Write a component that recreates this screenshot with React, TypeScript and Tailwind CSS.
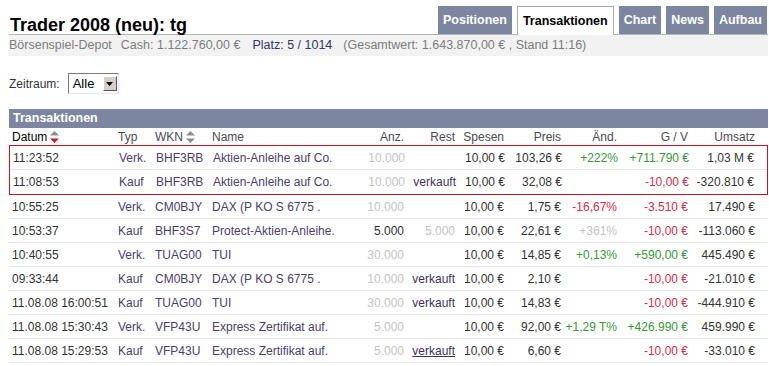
import React from 'react';

/* ════════════════════════════════════════════
   Depot header — title, tabs, summary line
   ════════════════════════════════════════════ */

const tabs = [
    { label: 'Positionen', active: false },
    { label: 'Transaktionen', active: true },
    { label: 'Chart', active: false },
    { label: 'News', active: false },
    { label: 'Aufbau', active: false },
];

function Header() {
    return (
        <div>
            <div className="flex items-end justify-between h-[35px] border-b border-[#b4b4b4] pl-[1px]">
                <h1 className="text-[18px] leading-[18px] font-bold text-black">Trader 2008 (neu): tg</h1>
                <div className="flex items-end gap-[5px] pr-[1px]">
                    {tabs.map((t) =>
                        t.active ? (
                            <div
                                key={t.label}
                                className="h-[29px] -mb-[1px] px-[5px] flex items-center bg-white border border-b-0 border-[#a8a8a8] text-[12.5px] font-bold text-black"
                            >
                                {t.label}
                            </div>
                        ) : (
                            <div
                                key={t.label}
                                className="h-[28px] px-[5px] flex items-center bg-[#7d86a1] text-[12.5px] font-bold text-white"
                            >
                                {t.label}
                            </div>
                        )
                    )}
                </div>
            </div>
            <div className="h-[21px] flex items-center bg-[#f2f2f2] text-[12.5px] text-[#7d7d7d] whitespace-nowrap">
                <span>Börsenspiel-Depot</span>
                <span className="ml-[9px]">Cash: 1.122.760,00 €</span>
                <span className="ml-[12px] text-[#34346e]">Platz: 5 / 1014</span>
                <span className="ml-[11px]">(Gesamtwert: 1.643.870,00 € , Stand 11:16)</span>
            </div>
        </div>
    );
}

/* ════════════════════════════════════════════
   Zeitraum filter — classic select box
   ════════════════════════════════════════════ */

function Zeitraum() {
    return (
        <div className="flex items-center mt-[17px] h-[21px]">
            <span className="text-[12px] text-[#333]">Zeitraum:</span>
            <div className="ml-[8px] w-[51px] h-[21px] flex items-center border border-t-[#7a7a7a] border-l-[#7a7a7a] border-b-[#e8e8e8] border-r-[#e8e8e8] bg-white">
                <span className="flex-1 pl-[4px] text-[13px] text-black leading-none">Alle</span>
                <div className="w-[14px] h-[15px] mr-[1px] flex items-center justify-center bg-[#d4d0c8] border border-t-white border-l-white border-b-[#555] border-r-[#555]">
                    <svg width="7" height="4" viewBox="0 0 7 4">
                        <polygon points="0,0 7,0 3.5,4" fill="#000" />
                    </svg>
                </div>
            </div>
        </div>
    );
}

/* ════════════════════════════════════════════
   Transactions table
   ════════════════════════════════════════════ */

const grid =
    'grid grid-cols-[106px_37px_57px_146px_52px_51px_49px_57px_56px_71px_1fr]';

type Tone = 'plain' | 'light' | 'green' | 'red';

interface Tx {
    datum: string;
    typ: string;
    wkn: string;
    name: string;
    anz: string;
    anzTone: Tone;
    rest?: string;
    restTone?: Tone;
    restLink?: boolean;
    spesen: string;
    preis: string;
    aend?: string;
    aendTone?: Tone;
    gv: string;
    gvTone: Tone;
    umsatz: string;
}

const rows: Tx[] = [
    { datum: '11:23:52', typ: 'Verk.', wkn: 'BHF3RB', name: 'Aktien-Anleihe auf Co.', anz: '10.000', anzTone: 'light', spesen: '10,00 €', preis: '103,26 €', aend: '+222%', aendTone: 'green', gv: '+711.790 €', gvTone: 'green', umsatz: '1,03 M €' },
    { datum: '11:08:53', typ: 'Kauf', wkn: 'BHF3RB', name: 'Aktien-Anleihe auf Co.', anz: '10.000', anzTone: 'light', rest: 'verkauft', spesen: '10,00 €', preis: '32,08 €', gv: '-10,00 €', gvTone: 'red', umsatz: '-320.810 €' },
    { datum: '10:55:25', typ: 'Verk.', wkn: 'CM0BJY', name: 'DAX (P KO S 6775 .', anz: '10.000', anzTone: 'light', spesen: '10,00 €', preis: '1,75 €', aend: '-16,67%', aendTone: 'red', gv: '-3.510 €', gvTone: 'red', umsatz: '17.490 €' },
    { datum: '10:53:37', typ: 'Kauf', wkn: 'BHF3S7', name: 'Protect-Aktien-Anleihe.', anz: '5.000', anzTone: 'plain', rest: '5.000', restTone: 'light', spesen: '10,00 €', preis: '22,61 €', aend: '+361%', aendTone: 'light', gv: '-10,00 €', gvTone: 'red', umsatz: '-113.060 €' },
    { datum: '10:40:55', typ: 'Verk.', wkn: 'TUAG00', name: 'TUI', anz: '30.000', anzTone: 'light', spesen: '10,00 €', preis: '14,85 €', aend: '+0,13%', aendTone: 'green', gv: '+590,00 €', gvTone: 'green', umsatz: '445.490 €' },
    { datum: '09:33:44', typ: 'Kauf', wkn: 'CM0BJY', name: 'DAX (P KO S 6775 .', anz: '10.000', anzTone: 'light', rest: 'verkauft', spesen: '10,00 €', preis: '2,10 €', gv: '-10,00 €', gvTone: 'red', umsatz: '-21.010 €' },
    { datum: '11.08.08 16:00:51', typ: 'Kauf', wkn: 'TUAG00', name: 'TUI', anz: '30.000', anzTone: 'light', rest: 'verkauft', spesen: '10,00 €', preis: '14,83 €', gv: '-10,00 €', gvTone: 'red', umsatz: '-444.910 €' },
    { datum: '11.08.08 15:30:43', typ: 'Verk.', wkn: 'VFP43U', name: 'Express Zertifikat auf.', anz: '5.000', anzTone: 'light', spesen: '10,00 €', preis: '92,00 €', aend: '+1,29 T%', aendTone: 'green', gv: '+426.990 €', gvTone: 'green', umsatz: '459.990 €' },
    { datum: '11.08.08 15:29:53', typ: 'Kauf', wkn: 'VFP43U', name: 'Express Zertifikat auf.', anz: '5.000', anzTone: 'light', rest: 'verkauft', restLink: true, spesen: '10,00 €', preis: '6,60 €', gv: '-10,00 €', gvTone: 'red', umsatz: '-33.010 €' },
];

const toneClass: Record<Tone, string> = {
    plain: 'text-[#333]',
    light: 'text-[#c4c4c4]',
    green: 'text-[#3a963a]',
    red: 'text-[#d42d45]',
};

function SortArrows({ active = false }: { active?: boolean }) {
    return (
        <svg width="9" height="12" viewBox="0 0 9 12" className="ml-[3px]">
            <polygon points="4.5,0 9,4.5 0,4.5" fill="#8c8c8c" />
            <polygon points="0,7.5 9,7.5 4.5,12" fill={active ? '#c8202e' : '#8c8c8c'} />
        </svg>
    );
}

function HeaderRow() {
    const r = 'text-right pr-[3px]';
    return (
        <div className={`${grid} h-[17px] items-center text-[12px] text-[#4a4a55] bg-white`}>
            <div className="pl-[3px] flex items-center text-black">
                Datum
                <SortArrows active />
            </div>
            <div className="pl-[3px]">Typ</div>
            <div className="pl-[3px] flex items-center">
                WKN
                <SortArrows />
            </div>
            <div className="pl-[3px]">Name</div>
            <div className={r}>Anz.</div>
            <div className={r}>Rest</div>
            <div className={r}>Spesen</div>
            <div className={r}>Preis</div>
            <div className={r}>Änd.</div>
            <div className={r}>G / V</div>
            <div className="text-right pr-[13px]">Umsatz</div>
        </div>
    );
}

function TxRow({ tx, last = false }: { tx: Tx; last?: boolean }) {
    const r = 'text-right pr-[3px] whitespace-nowrap';
    return (
        <div
            className={`${grid} h-[24px] items-center text-[12px] ${last ? '' : 'border-b border-[#e4e4e4]'}`}
        >
            <div className="pl-[3px] text-[#333] whitespace-nowrap">{tx.datum}</div>
            <div className="pl-[3px] text-[#4b3d6c]">{tx.typ}</div>
            <div className="pl-[3px] text-[#4b3d6c]">{tx.wkn}</div>
            <div className="pl-[3px] text-[#4b3d6c] whitespace-nowrap">{tx.name}</div>
            <div className={`${r} ${toneClass[tx.anzTone]}`}>{tx.anz}</div>
            <div className={`${r} ${tx.restTone ? toneClass[tx.restTone] : 'text-[#3e3160]'}`}>
                {tx.restLink ? <span className="underline">{tx.rest}</span> : tx.rest}
            </div>
            <div className={`${r} text-[#333]`}>{tx.spesen}</div>
            <div className={`${r} text-[#333]`}>{tx.preis}</div>
            <div className={`${r} ${tx.aendTone ? toneClass[tx.aendTone] : ''}`}>{tx.aend}</div>
            <div className={`${r} ${toneClass[tx.gvTone]}`}>{tx.gv}</div>
            <div className="text-right pr-[13px] text-[#333] whitespace-nowrap">{tx.umsatz}</div>
        </div>
    );
}

function TxTable() {
    return (
        <div className="mt-[15px]">
            <div className="h-[19px] flex items-center bg-[#7d86a1] pl-[4px] text-[12.5px] font-bold text-white">
                Transaktionen
            </div>
            <HeaderRow />
            <div className="border border-[#cc1428]">
                <TxRow tx={rows[0]} />
                <TxRow tx={rows[1]} last />
            </div>
            {rows.slice(2).map((tx, i) => (
                <TxRow key={i} tx={tx} />
            ))}
        </div>
    );
}

export default function App() {
    return (
        <div className="w-[769px] h-[366px] overflow-hidden bg-white pl-[9px] pr-[1px] font-['Liberation_Sans',Arial,sans-serif]">
            <Header />
            <Zeitraum />
            <TxTable />
        </div>
    );
}
